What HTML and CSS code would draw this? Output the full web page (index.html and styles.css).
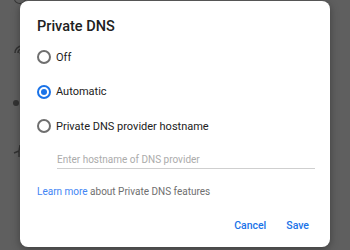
FILE: index.html
```html
<!DOCTYPE html>
<html lang="en">
    <head>
        <meta charset="UTF-8">
        <meta name="viewport" content="width=device-width, initial-scale=1.0">
        <title>Private DNS</title>
        <link rel="stylesheet" href="styles.css">
    </head>
    <body>
        <!-- 뒤에 깔린 설정 화면 아이콘들 (다이얼로그 왼쪽으로 살짝 보임) -->
        <div class="backdrop">
            <span class="bg-icon ico-top"></span>
            <svg class="bg-icon ico-wifi" width="12" height="14" viewBox="0 0 12 14">
                <path d="M10 2 A7 7 0 0 0 3 9" fill="none" stroke="#333" stroke-width="1.6"/>
                <path d="M10 5 A4 4 0 0 0 6 9" fill="none" stroke="#333" stroke-width="1.6"/>
                <circle cx="9" cy="9" r="1.5" fill="#333"/>
            </svg>
            <span class="bg-icon ico-dot"></span>
            <svg class="bg-icon ico-plane" width="10" height="12" viewBox="0 0 10 12">
                <path d="M7 0 L6 6 L1 8 M6 6 L6 12" fill="none" stroke="#333" stroke-width="1.4"/>
            </svg>
        </div>

        <div class="dialog">
            <h1 class="title">Private DNS</h1>

            <div class="options">
                <label class="option">
                    <span class="radio"></span>
                    <span>Off</span>
                </label>
                <label class="option">
                    <span class="radio checked"></span>
                    <span>Automatic</span>
                </label>
                <label class="option">
                    <span class="radio"></span>
                    <span>Private DNS provider hostname</span>
                </label>
            </div>

            <div class="hostname">Enter hostname of DNS provider</div>

            <p class="learn"><span class="link">Learn more</span> about Private DNS features</p>

            <div class="actions">
                <span class="btn">Cancel</span>
                <span class="btn">Save</span>
            </div>
        </div>
    </body>
</html>
```

FILE: styles.css
```css
body {
    margin: 0;
    width: 350px;
    height: 250px;
    overflow: hidden;
    background: #5f5f5f;
    font-family: Roboto, "Liberation Sans", sans-serif;
    position: relative;
}

.backdrop {
    position: absolute;
    left: 0;
    top: 0;
    width: 20px;
    height: 250px;
}
.bg-icon {
    position: absolute;
    display: block;
}
.ico-top {
    left: 14px;
    top: -6px;
    width: 10px;
    height: 8px;
    border: 1.5px solid #333;
    border-radius: 50%;
}
.ico-wifi {
    left: 12px;
    top: 44px;
}
.ico-dot {
    left: 13px;
    top: 100px;
    width: 6px;
    height: 6px;
    border-radius: 50%;
    background: #333;
}
.ico-plane {
    left: 13px;
    top: 145px;
}

.dialog {
    position: relative;
    margin: 1px 0 0 20px;
    width: 310px;
    height: 246px;
    box-sizing: border-box;
    padding: 17px 15px 0 17px;
    background: #fff;
    border-radius: 8px;
    box-shadow: 0 2px 8px rgba(0, 0, 0, 0.35);
    display: flex;
    flex-direction: column;
}

.title {
    margin: 0;
    font-size: 14.5px;
    font-weight: 500;
    line-height: 18px;
    color: #212121;
}

.options {
    margin-top: 4px;
    display: flex;
    flex-direction: column;
}
.option {
    display: flex;
    align-items: center;
    gap: 5px;
    height: 34.5px;
    font-size: 11px;
    color: #212121;
}
.radio {
    width: 10px;
    height: 10px;
    border: 2px solid #6f6f6f;
    border-radius: 50%;
    flex: none;
    display: flex;
    align-items: center;
    justify-content: center;
}
.radio.checked {
    border-color: #1a73e8;
}
.radio.checked::after {
    content: "";
    width: 6px;
    height: 6px;
    border-radius: 50%;
    background: #1a73e8;
}

.hostname {
    margin: 9px 0 0 20px;
    padding-bottom: 1px;
    border-bottom: 1px solid #cfcfcf;
    font-size: 10px;
    line-height: 14px;
    color: #ababab;
}

.learn {
    margin: 16px 0 0 0;
    font-size: 10px;
    line-height: 14px;
    color: #6f6f6f;
}
.link {
    color: #4285f4;
}

.actions {
    margin-top: 20px;
    display: flex;
    justify-content: flex-end;
    gap: 20px;
    padding-right: 6px;
}
.btn {
    font-size: 10.5px;
    font-weight: 500;
    color: #1a73e8;
    line-height: 14px;
}
```
